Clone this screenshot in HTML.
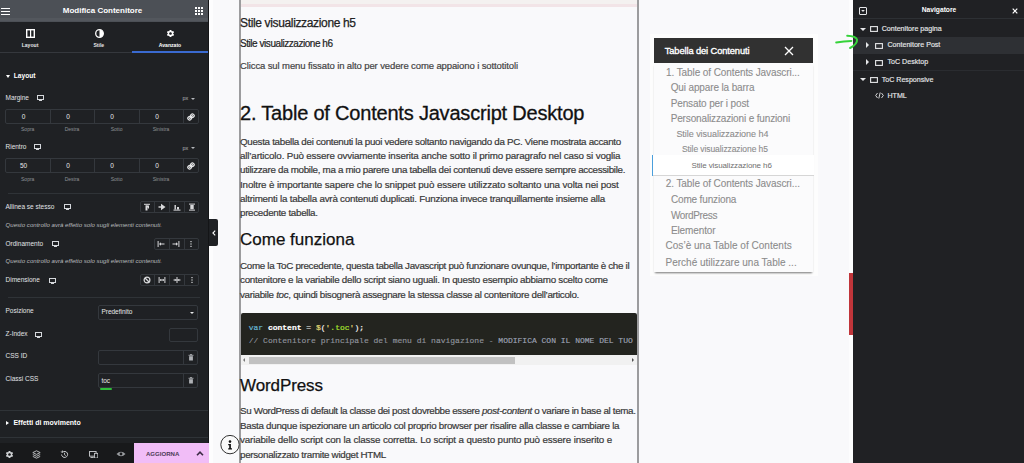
<!DOCTYPE html>
<html><head><meta charset="utf-8">
<style>
*{margin:0;padding:0;box-sizing:border-box}
html,body{width:1024px;height:463px;overflow:hidden;background:#f9f9fb;font-family:"Liberation Sans",sans-serif;position:relative}
.a{position:absolute;white-space:nowrap}
</style></head><body>
<div class="a" style="left:0px;top:0px;width:209.00px;height:463.00px;background:#1f2124"></div>
<div class="a" style="left:0px;top:0px;width:209.00px;height:21.50px;background:#4c5056"></div>
<div class="a" style="left:1px;top:8px;width:9.00px;height:1.40px;background:#fff"></div>
<div class="a" style="left:1px;top:10.8px;width:9.00px;height:1.40px;background:#fff"></div>
<div class="a" style="left:1px;top:13.6px;width:9.00px;height:1.40px;background:#fff"></div>
<div class="a" style="left:27.50px;width:150px;text-align:center;top:6.40px;line-height:10px;font-size:8px;color:#fff;font-weight:bold;">Modifica Contenitore</div>
<div class="a" style="left:0px;top:18.3px;width:209.00px;height:3.20px;background:#53575d"></div>
<div class="a" style="left:194.5px;top:6.8px;width:2.40px;height:2.20px;background:#fff"></div>
<div class="a" style="left:194.5px;top:9.7px;width:2.40px;height:2.20px;background:#fff"></div>
<div class="a" style="left:194.5px;top:12.6px;width:2.40px;height:2.20px;background:#fff"></div>
<div class="a" style="left:197.5px;top:6.8px;width:2.40px;height:2.20px;background:#fff"></div>
<div class="a" style="left:197.5px;top:9.7px;width:2.40px;height:2.20px;background:#fff"></div>
<div class="a" style="left:197.5px;top:12.6px;width:2.40px;height:2.20px;background:#fff"></div>
<div class="a" style="left:200.5px;top:6.8px;width:2.40px;height:2.20px;background:#fff"></div>
<div class="a" style="left:200.5px;top:9.7px;width:2.40px;height:2.20px;background:#fff"></div>
<div class="a" style="left:200.5px;top:12.6px;width:2.40px;height:2.20px;background:#fff"></div>
<svg class="a" style="left:26px;top:29px" width="9" height="9" viewBox="0 0 9 9"><rect x="0.7" y="0.7" width="7.6" height="7.6" fill="none" stroke="#fff" stroke-width="1.4"/><rect x="4" y="1" width="1.2" height="7" fill="#fff"/></svg>
<svg class="a" style="left:94.5px;top:29px" width="9" height="9" viewBox="0 0 9 9"><circle cx="4.5" cy="4.5" r="3.8" fill="none" stroke="#fff" stroke-width="1.3"/><path d="M4.5 0.7 A3.8 3.8 0 0 1 4.5 8.3 Z" fill="#fff"/></svg>
<svg class="a" style="left:165.5px;top:28.5px" width="9" height="9" viewBox="0 0 24 24"><path fill="#fff" d="M19.14 12.94c.04-.3.06-.61.06-.94 0-.32-.02-.64-.07-.94l2.03-1.58a.49.49 0 0 0 .12-.61l-1.92-3.32a.488.488 0 0 0-.59-.22l-2.39.96c-.5-.38-1.03-.7-1.62-.94l-.36-2.54a.484.484 0 0 0-.48-.41h-3.84c-.24 0-.43.17-.47.41l-.36 2.54c-.59.24-1.13.57-1.62.94l-2.39-.96c-.22-.08-.47 0-.59.22L2.74 8.87c-.12.21-.08.47.12.61l2.03 1.58c-.05.3-.09.63-.09.94s.02.64.07.94l-2.03 1.58a.49.49 0 0 0-.12.61l1.92 3.32c.12.22.37.29.59.22l2.39-.96c.5.38 1.03.7 1.62.94l.36 2.54c.05.24.24.41.48.41h3.84c.24 0 .44-.17.47-.41l.36-2.54c.59-.24 1.13-.56 1.62-.94l2.39.96c.22.08.47 0 .59-.22l1.92-3.32c.12-.22.07-.47-.12-.61l-2.01-1.58zM12 15.6c-1.98 0-3.6-1.62-3.6-3.6s1.62-3.6 3.6-3.6 3.6 1.62 3.6 3.6-1.62 3.6-3.6 3.6z"/></svg>
<div class="a" style="left:-10.00px;width:80px;text-align:center;top:39.50px;line-height:10px;font-size:5.1px;color:#e6e7e8;font-weight:bold;">Layout</div>
<div class="a" style="left:58.80px;width:80px;text-align:center;top:39.50px;line-height:10px;font-size:5.1px;color:#e6e7e8;font-weight:bold;">Stile</div>
<div class="a" style="left:130.00px;width:80px;text-align:center;top:39.50px;line-height:10px;font-size:5.1px;color:#fff;font-weight:bold;">Avanzato</div>
<div class="a" style="left:0px;top:52px;width:132.00px;height:1.00px;background:#35383d"></div>
<div class="a" style="left:131.5px;top:51.3px;width:77.50px;height:1.70px;background:#3a6ad0"></div>
<div class="a" style="left:13.8px;top:70.50px;line-height:10px;font-size:6.6px;color:#fff;font-weight:bold;font-style:normal;">Layout</div>
<div class="a" style="left:6px;top:74.5px;width:0;height:0;border-left:2.5px solid transparent;border-right:2.5px solid transparent;border-top:3px solid #fff"></div>
<div class="a" style="left:5.5px;top:92.70px;line-height:10px;font-size:6.5px;color:#e2e4e7;font-weight:normal;font-style:normal;">Margine</div>
<svg class="a" style="left:37px;top:95px" width="7" height="6" viewBox="0 0 7 6"><rect x="0.5" y="0.5" width="6" height="4" fill="none" stroke="#d5d8dc" stroke-width="1"/><rect x="2" y="5" width="3" height="1" fill="#d5d8dc"/></svg>
<div class="a" style="left:182.5px;top:93.20px;line-height:10px;font-size:5.5px;color:#b5b8bc;font-weight:normal;font-style:normal;">px</div>
<div class="a" style="left:190.5px;top:97.7px;width:0;height:0;border-left:2px solid transparent;border-right:2px solid transparent;border-top:2px solid #b5b8bc"></div>
<div class="a" style="left:5px;top:109px;width:194.00px;height:15.00px;border:1px solid #34383d;border-radius:2px"></div>
<div class="a" style="left:49.5px;top:109px;width:1.00px;height:15.00px;background:#34383d"></div>
<div class="a" style="left:94px;top:109px;width:1.00px;height:15.00px;background:#34383d"></div>
<div class="a" style="left:139px;top:109px;width:1.00px;height:15.00px;background:#34383d"></div>
<div class="a" style="left:183px;top:109px;width:1.00px;height:15.00px;background:#34383d"></div>
<div class="a" style="left:-16.50px;width:80px;text-align:center;top:111.50px;line-height:10px;font-size:6.5px;color:#e8e9ea;font-weight:normal;">0</div>
<div class="a" style="left:28.00px;width:80px;text-align:center;top:111.50px;line-height:10px;font-size:6.5px;color:#e8e9ea;font-weight:normal;">0</div>
<div class="a" style="left:72.00px;width:80px;text-align:center;top:111.50px;line-height:10px;font-size:6.5px;color:#e8e9ea;font-weight:normal;">0</div>
<div class="a" style="left:117.00px;width:80px;text-align:center;top:111.50px;line-height:10px;font-size:6.5px;color:#e8e9ea;font-weight:normal;">0</div>
<div class="a" style="left:-12.30px;width:80px;text-align:center;top:124.00px;line-height:10px;font-size:5px;color:#8e9196;font-weight:normal;">Sopra</div>
<div class="a" style="left:32.00px;width:80px;text-align:center;top:124.00px;line-height:10px;font-size:5px;color:#8e9196;font-weight:normal;">Destra</div>
<div class="a" style="left:76.60px;width:80px;text-align:center;top:124.00px;line-height:10px;font-size:5px;color:#8e9196;font-weight:normal;">Sotto</div>
<div class="a" style="left:121.00px;width:80px;text-align:center;top:124.00px;line-height:10px;font-size:5px;color:#8e9196;font-weight:normal;">Sinistra</div>
<svg class="a" style="left:187px;top:112.5px" width="8" height="8" viewBox="0 0 8 8"><path d="M2.2 5.8 L5.8 2.2" stroke="#e8e9ea" stroke-width="1.3"/><rect x="0.9" y="3.6" width="3.4" height="3.4" rx="1.5" transform="rotate(-45 2.6 5.3)" fill="none" stroke="#e8e9ea" stroke-width="1.2"/><rect x="3.7" y="1" width="3.4" height="3.4" rx="1.5" transform="rotate(-45 5.4 2.7)" fill="none" stroke="#e8e9ea" stroke-width="1.2"/></svg>
<div class="a" style="left:5.5px;top:141.70px;line-height:10px;font-size:6.5px;color:#e2e4e7;font-weight:normal;font-style:normal;">Rientro</div>
<svg class="a" style="left:34px;top:144px" width="7" height="6" viewBox="0 0 7 6"><rect x="0.5" y="0.5" width="6" height="4" fill="none" stroke="#d5d8dc" stroke-width="1"/><rect x="2" y="5" width="3" height="1" fill="#d5d8dc"/></svg>
<div class="a" style="left:182.5px;top:142.80px;line-height:10px;font-size:5.5px;color:#b5b8bc;font-weight:normal;font-style:normal;">px</div>
<div class="a" style="left:190.5px;top:147.3px;width:0;height:0;border-left:2px solid transparent;border-right:2px solid transparent;border-top:2px solid #b5b8bc"></div>
<div class="a" style="left:5px;top:158px;width:194.00px;height:15.00px;border:1px solid #34383d;border-radius:2px"></div>
<div class="a" style="left:49.5px;top:158px;width:1.00px;height:15.00px;background:#34383d"></div>
<div class="a" style="left:94px;top:158px;width:1.00px;height:15.00px;background:#34383d"></div>
<div class="a" style="left:139px;top:158px;width:1.00px;height:15.00px;background:#34383d"></div>
<div class="a" style="left:183px;top:158px;width:1.00px;height:15.00px;background:#34383d"></div>
<div class="a" style="left:-16.50px;width:80px;text-align:center;top:160.50px;line-height:10px;font-size:6.5px;color:#e8e9ea;font-weight:normal;">50</div>
<div class="a" style="left:28.00px;width:80px;text-align:center;top:160.50px;line-height:10px;font-size:6.5px;color:#e8e9ea;font-weight:normal;">0</div>
<div class="a" style="left:72.00px;width:80px;text-align:center;top:160.50px;line-height:10px;font-size:6.5px;color:#e8e9ea;font-weight:normal;">0</div>
<div class="a" style="left:117.00px;width:80px;text-align:center;top:160.50px;line-height:10px;font-size:6.5px;color:#e8e9ea;font-weight:normal;">0</div>
<div class="a" style="left:-12.30px;width:80px;text-align:center;top:173.50px;line-height:10px;font-size:5px;color:#8e9196;font-weight:normal;">Sopra</div>
<div class="a" style="left:32.00px;width:80px;text-align:center;top:173.50px;line-height:10px;font-size:5px;color:#8e9196;font-weight:normal;">Destra</div>
<div class="a" style="left:76.60px;width:80px;text-align:center;top:173.50px;line-height:10px;font-size:5px;color:#8e9196;font-weight:normal;">Sotto</div>
<div class="a" style="left:121.00px;width:80px;text-align:center;top:173.50px;line-height:10px;font-size:5px;color:#8e9196;font-weight:normal;">Sinistra</div>
<svg class="a" style="left:187px;top:161.5px" width="8" height="8" viewBox="0 0 8 8"><path d="M2.2 5.8 L5.8 2.2" stroke="#e8e9ea" stroke-width="1.3"/><rect x="0.9" y="3.6" width="3.4" height="3.4" rx="1.5" transform="rotate(-45 2.6 5.3)" fill="none" stroke="#e8e9ea" stroke-width="1.2"/><rect x="3.7" y="1" width="3.4" height="3.4" rx="1.5" transform="rotate(-45 5.4 2.7)" fill="none" stroke="#e8e9ea" stroke-width="1.2"/></svg>
<div class="a" style="left:8px;top:192.5px;width:191.50px;height:1.00px;background:#2f3337"></div>
<div class="a" style="left:5.5px;top:202.00px;line-height:10px;font-size:6.5px;color:#e2e4e7;font-weight:normal;font-style:normal;">Allinea se stesso</div>
<svg class="a" style="left:63.5px;top:204px" width="7" height="6" viewBox="0 0 7 6"><rect x="0.5" y="0.5" width="6" height="4" fill="none" stroke="#d5d8dc" stroke-width="1"/><rect x="2" y="5" width="3" height="1" fill="#d5d8dc"/></svg>
<div class="a" style="left:139.5px;top:200.5px;width:59.50px;height:12.00px;border:1px solid #34383d;border-radius:2px"></div>
<div class="a" style="left:154.375px;top:200.5px;width:1.00px;height:12.00px;background:#34383d"></div>
<div class="a" style="left:169.25px;top:200.5px;width:1.00px;height:12.00px;background:#34383d"></div>
<div class="a" style="left:184.125px;top:200.5px;width:1.00px;height:12.00px;background:#34383d"></div>
<div class="a" style="left:5.5px;top:219.90px;line-height:10px;font-size:6.1px;color:#b9bbbe;font-weight:normal;font-style:italic;">Questo controllo avrà effetto solo sugli elementi contenuti.</div>
<div class="a" style="left:5.5px;top:238.70px;line-height:10px;font-size:6.5px;color:#e2e4e7;font-weight:normal;font-style:normal;">Ordinamento</div>
<svg class="a" style="left:51.8px;top:241px" width="7" height="6" viewBox="0 0 7 6"><rect x="0.5" y="0.5" width="6" height="4" fill="none" stroke="#d5d8dc" stroke-width="1"/><rect x="2" y="5" width="3" height="1" fill="#d5d8dc"/></svg>
<div class="a" style="left:153.5px;top:237.5px;width:45.50px;height:12.00px;border:1px solid #34383d;border-radius:2px"></div>
<div class="a" style="left:168.66666666666666px;top:237.5px;width:1.00px;height:12.00px;background:#34383d"></div>
<div class="a" style="left:183.83333333333334px;top:237.5px;width:1.00px;height:12.00px;background:#34383d"></div>
<div class="a" style="left:5.5px;top:256.20px;line-height:10px;font-size:6.1px;color:#b9bbbe;font-weight:normal;font-style:italic;">Questo controllo avrà effetto solo sugli elementi contenuti.</div>
<div class="a" style="left:5.5px;top:275.10px;line-height:10px;font-size:6.5px;color:#e2e4e7;font-weight:normal;font-style:normal;">Dimensione</div>
<svg class="a" style="left:48.7px;top:277.5px" width="7" height="6" viewBox="0 0 7 6"><rect x="0.5" y="0.5" width="6" height="4" fill="none" stroke="#d5d8dc" stroke-width="1"/><rect x="2" y="5" width="3" height="1" fill="#d5d8dc"/></svg>
<div class="a" style="left:139.5px;top:274px;width:59.50px;height:12.00px;border:1px solid #34383d;border-radius:2px"></div>
<div class="a" style="left:154.375px;top:274px;width:1.00px;height:12.00px;background:#34383d"></div>
<div class="a" style="left:169.25px;top:274px;width:1.00px;height:12.00px;background:#34383d"></div>
<div class="a" style="left:184.125px;top:274px;width:1.00px;height:12.00px;background:#34383d"></div>
<div class="a" style="left:8px;top:296.5px;width:191.50px;height:1.00px;background:#2f3337"></div>
<div class="a" style="left:5.5px;top:306.30px;line-height:10px;font-size:6.5px;color:#e2e4e7;font-weight:normal;font-style:normal;">Posizione</div>
<div class="a" style="left:97.5px;top:305px;width:100.50px;height:14.50px;border:1px solid #34383d;border-radius:2px"></div>
<div class="a" style="left:101.4px;top:307.30px;line-height:10px;font-size:6.5px;color:#e8e9ea;font-weight:normal;font-style:normal;">Predefinito</div>
<div class="a" style="left:190px;top:311.5px;width:0;height:0;border-left:2.5px solid transparent;border-right:2.5px solid transparent;border-top:2.5px solid #e8e9ea"></div>
<div class="a" style="left:5.5px;top:329.20px;line-height:10px;font-size:6.5px;color:#e2e4e7;font-weight:normal;font-style:normal;">Z-Index</div>
<svg class="a" style="left:35px;top:331.5px" width="7" height="6" viewBox="0 0 7 6"><rect x="0.5" y="0.5" width="6" height="4" fill="none" stroke="#d5d8dc" stroke-width="1"/><rect x="2" y="5" width="3" height="1" fill="#d5d8dc"/></svg>
<div class="a" style="left:169px;top:328px;width:29.00px;height:14.00px;border:1px solid #34383d;border-radius:2px"></div>
<div class="a" style="left:5.5px;top:351.30px;line-height:10px;font-size:6.5px;color:#e2e4e7;font-weight:normal;font-style:normal;">CSS ID</div>
<div class="a" style="left:97.5px;top:350px;width:100.50px;height:15.00px;border:1px solid #34383d;border-radius:2px"></div>
<div class="a" style="left:183px;top:350px;width:1.00px;height:15.00px;background:#34383d"></div>
<div class="a" style="left:5.5px;top:374.20px;line-height:10px;font-size:6.5px;color:#e2e4e7;font-weight:normal;font-style:normal;">Classi CSS</div>
<div class="a" style="left:97.5px;top:373px;width:100.50px;height:15.00px;border:1px solid #34383d;border-radius:2px"></div>
<div class="a" style="left:183px;top:373px;width:1.00px;height:15.00px;background:#34383d"></div>
<div class="a" style="left:101.4px;top:375.50px;line-height:10px;font-size:6.5px;color:#e8e9ea;font-weight:normal;font-style:normal;">toc</div>
<div class="a" style="left:99.6px;top:388px;width:12.00px;height:1.50px;background:#2fbf3a;border-radius:1px"></div>
<svg class="a" style="left:187.5px;top:354.0px" width="6" height="7" viewBox="0 0 6 7"><rect x="0.5" y="0.8" width="5" height="0.9" fill="#aeb1b5"/><rect x="2" y="0.2" width="2" height="0.9" fill="#aeb1b5"/><rect x="1.1" y="2.2" width="3.8" height="4.3" fill="#aeb1b5"/></svg>
<svg class="a" style="left:187.5px;top:377.0px" width="6" height="7" viewBox="0 0 6 7"><rect x="0.5" y="0.8" width="5" height="0.9" fill="#aeb1b5"/><rect x="2" y="0.2" width="2" height="0.9" fill="#aeb1b5"/><rect x="1.1" y="2.2" width="3.8" height="4.3" fill="#aeb1b5"/></svg>
<div class="a" style="left:0px;top:410px;width:209.00px;height:1.00px;background:#2f3337"></div>
<div class="a" style="left:13.4px;top:418.30px;line-height:10px;font-size:7px;color:#fff;font-weight:bold;font-style:normal;">Effetti di movimento</div>
<div class="a" style="left:6px;top:420.5px;width:0;height:0;border-top:2.5px solid transparent;border-bottom:2.5px solid transparent;border-left:3px solid #fff"></div>
<div class="a" style="left:0px;top:436.5px;width:209.00px;height:1.00px;background:#2f3337"></div>
<div class="a" style="left:0px;top:442.5px;width:209.00px;height:20.50px;background:#18191b"></div>
<div class="a" style="left:134.3px;top:442.5px;width:74.70px;height:20.50px;background:#f1bdf7"></div>
<div class="a" style="left:146px;top:448.80px;line-height:10px;font-size:6.05px;color:#4b3a55;font-weight:bold;font-style:normal;">AGGIORNA</div>
<svg class="a" style="left:196px;top:451.3px" width="8" height="5" viewBox="0 0 8 5"><path d="M1 4.2 L4 1.2 L7 4.2" fill="none" stroke="#3c2b45" stroke-width="1.6"/></svg>
<div class="a" style="left:5.800000000000001px;top:450px;width:6.00px;height:6.00px;background:#c9cbce;border-radius:2px;opacity:.0"></div>
<div class="a" style="left:33.3px;top:450px;width:6.00px;height:6.00px;background:#c9cbce;border-radius:2px;opacity:.0"></div>
<div class="a" style="left:61.400000000000006px;top:450px;width:6.00px;height:6.00px;background:#c9cbce;border-radius:2px;opacity:.0"></div>
<div class="a" style="left:89.6px;top:450px;width:6.00px;height:6.00px;background:#c9cbce;border-radius:2px;opacity:.0"></div>
<div class="a" style="left:117.4px;top:450px;width:6.00px;height:6.00px;background:#c9cbce;border-radius:2px;opacity:.0"></div>
<svg class="a" style="left:4.5px;top:450px" width="9" height="9" viewBox="0 0 24 24"><path fill="#d0d2d5" d="M19.14 12.94c.04-.3.06-.61.06-.94 0-.32-.02-.64-.07-.94l2.03-1.58a.49.49 0 0 0 .12-.61l-1.92-3.32a.488.488 0 0 0-.59-.22l-2.39.96c-.5-.38-1.030-.7-1.62-.94l-.36-2.54a.484.484 0 0 0-.48-.41h-3.84c-.24 0-.43.17-.47.41l-.36 2.54c-.59.24-1.13.57-1.62.94l-2.39-.96c-.22-.08-.47 0-.59.22L2.74 8.87c-.12.21-.08.47.12.61l2.03 1.58c-.05.3-.09.63-.09.94s.02.64.07.94l-2.03 1.58a.49.49 0 0 0-.12.61l1.92 3.32c.12.22.37.29.59.22l2.39-.96c.5.38 1.03.7 1.62.94l.36 2.54c.05.24.24.41.48.41h3.84c.24 0 .44-.17.47-.41l.36-2.54c.59-.24 1.13-.56 1.62-.94l2.39.96c.22.08.47 0 .59-.22l1.92-3.32c.12-.22.07-.47-.12-.61l-2.01-1.58zM12 15.6c-1.98 0-3.6-1.62-3.6-3.6s1.62-3.6 3.6-3.6 3.6 1.62 3.6 3.6-1.62 3.6-3.6 3.6z"/></svg>
<svg class="a" style="left:32px;top:450px" width="9" height="9" viewBox="0 0 9 9"><path d="M4.5 0.8 L8.2 2.6 L4.5 4.4 L0.8 2.6 Z" fill="none" stroke="#c7c9cc" stroke-width="0.9"/><path d="M0.8 4.5 L4.5 6.3 L8.2 4.5 M0.8 6.4 L4.5 8.2 L8.2 6.4" fill="none" stroke="#c7c9cc" stroke-width="0.9"/></svg>
<svg class="a" style="left:60px;top:450.3px" width="9" height="9" viewBox="0 0 9 9"><path d="M1.6 4.5 A3 3 0 1 0 2.5 2.3" fill="none" stroke="#c7c9cc" stroke-width="1"/><path d="M0.8 1.8 L2.7 2.3 L2.4 0.5" fill="none" stroke="#c7c9cc" stroke-width="0.9"/><path d="M4.5 2.8 V4.7 L5.8 5.6" fill="none" stroke="#c7c9cc" stroke-width="0.9"/></svg>
<svg class="a" style="left:88.5px;top:450.5px" width="9.5" height="7.5" viewBox="0 0 10 8"><rect x="0.5" y="0.5" width="7" height="5" fill="none" stroke="#c7c9cc" stroke-width="1"/><rect x="5.8" y="2.5" width="3.5" height="5" fill="#18191b" stroke="#c7c9cc" stroke-width="0.9"/><rect x="1.5" y="6.5" width="3.5" height="1" fill="#c7c9cc"/></svg>
<svg class="a" style="left:115.5px;top:450.5px" width="10" height="6" viewBox="0 0 10 6"><path d="M0.5 3 Q5 -1.5 9.5 3 Q5 7.5 0.5 3 Z" fill="#9a9da1"/><circle cx="5" cy="3" r="1.4" fill="#18191b"/></svg>
<svg class="a" style="left:143.2px;top:202.8px" width="8" height="8" viewBox="0 0 8 8"><rect x="1" y="0.8" width="6" height="1" fill="#d9dadc"/><path d="M2.5 2.5 L6 2.5 L6 6 Z" fill="#d9dadc"/><rect x="2.5" y="2.5" width="2" height="5" fill="#d9dadc"/></svg>
<svg class="a" style="left:158.0px;top:202.8px" width="8" height="8" viewBox="0 0 8 8"><rect x="0.5" y="3.3" width="3" height="1.4" fill="#d9dadc"/><path d="M3 0.8 L7.5 4 L3 7.2 Z" fill="#d9dadc"/></svg>
<svg class="a" style="left:172.8px;top:202.8px" width="8" height="8" viewBox="0 0 8 8"><rect x="1.5" y="2" width="1.4" height="4.5" fill="#d9dadc"/><rect x="4" y="4" width="2" height="2.5" fill="#d9dadc"/><rect x="0.5" y="6.6" width="7" height="1" fill="#d9dadc"/></svg>
<svg class="a" style="left:187.6px;top:202.8px" width="8" height="8" viewBox="0 0 8 8"><rect x="1" y="0.6" width="6" height="1" fill="#d9dadc"/><rect x="1" y="6.6" width="6" height="1" fill="#d9dadc"/><rect x="2.3" y="2" width="3.4" height="4.2" fill="#d9dadc"/></svg>
<svg class="a" style="left:157.0px;top:239.5px" width="8" height="8" viewBox="0 0 8 8"><rect x="0.6" y="1" width="1" height="6" fill="#d9dadc"/><path d="M2 4 L4 2.3 L4 5.7 Z" fill="#d9dadc"/><rect x="3.5" y="3.5" width="4" height="1" fill="#d9dadc"/></svg>
<svg class="a" style="left:172.2px;top:239.5px" width="8" height="8" viewBox="0 0 8 8"><rect x="6.4" y="1" width="1" height="6" fill="#d9dadc"/><path d="M6 4 L4 2.3 L4 5.7 Z" fill="#d9dadc"/><rect x="0.5" y="3.5" width="4" height="1" fill="#d9dadc"/></svg>
<svg class="a" style="left:187.4px;top:239.5px" width="8" height="8" viewBox="0 0 8 8"><rect x="3.4" y="1" width="1.2" height="1.2" fill="#d9dadc"/><rect x="3.4" y="3.4" width="1.2" height="1.2" fill="#d9dadc"/><rect x="3.4" y="5.8" width="1.2" height="1.2" fill="#d9dadc"/></svg>
<svg class="a" style="left:143.2px;top:276.2px" width="8" height="8" viewBox="0 0 8 8"><circle cx="4" cy="4" r="2.9" fill="none" stroke="#d9dadc" stroke-width="1.2"/><path d="M2 2 L6 6" stroke="#d9dadc" stroke-width="1.2"/></svg>
<svg class="a" style="left:158.0px;top:276.2px" width="8" height="8" viewBox="0 0 8 8"><rect x="0.6" y="1" width="1" height="6" fill="#d9dadc"/><rect x="6.4" y="1" width="1" height="6" fill="#d9dadc"/><rect x="2" y="3.5" width="4" height="1" fill="#d9dadc"/><path d="M1.8 4 L3.2 2.8 L3.2 5.2 Z M6.2 4 L4.8 2.8 L4.8 5.2 Z" fill="#d9dadc"/></svg>
<svg class="a" style="left:172.8px;top:276.2px" width="8" height="8" viewBox="0 0 8 8"><rect x="3.5" y="1" width="1" height="6" fill="#d9dadc"/><rect x="0.5" y="3.5" width="7" height="1" fill="#d9dadc"/><path d="M3.2 4 L1.8 2.8 L1.8 5.2 Z M4.8 4 L6.2 2.8 L6.2 5.2 Z" fill="#d9dadc"/></svg>
<svg class="a" style="left:187.6px;top:276.2px" width="8" height="8" viewBox="0 0 8 8"><rect x="3.4" y="1" width="1.2" height="1.2" fill="#d9dadc"/><rect x="3.4" y="3.4" width="1.2" height="1.2" fill="#d9dadc"/><rect x="3.4" y="5.8" width="1.2" height="1.2" fill="#d9dadc"/></svg>
<div class="a" style="left:208px;top:0px;width:1.00px;height:442.50px;background:#141517"></div>
<div class="a" style="left:209px;top:0px;width:4.00px;height:463.00px;background:#fdfdfe"></div>
<div class="a" style="left:209px;top:219px;width:8.50px;height:27.00px;background:#1f2124;border-radius:0 2px 2px 0"></div>
<svg class="a" style="left:211.5px;top:229.5px" width="4" height="6" viewBox="0 0 4 6"><path d="M3.2 0.6 L0.9 3 L3.2 5.4" fill="none" stroke="#fff" stroke-width="1.1"/></svg>
<div class="a" style="left:240.8px;top:0px;width:396.20px;height:7.00px;background:#f4f1f0"></div>
<div class="a" style="left:240.8px;top:3.6px;width:396.20px;height:3.20px;background:#f2e4e7"></div>
<div class="a" style="left:239.3px;top:0px;width:1.50px;height:463.00px;background:#9c9c9e"></div>
<div class="a" style="left:637px;top:0px;width:1.50px;height:463.00px;background:#9c9c9e"></div>
<div class="a" style="left:240px;top:14.80px;line-height:16px;font-size:12px;color:#222;font-weight:normal;letter-spacing:-0.35px;-webkit-text-stroke:0.25px #222">Stile visualizzazione h5</div>
<div class="a" style="left:240px;top:35.50px;line-height:16px;font-size:10px;color:#222;font-weight:normal;letter-spacing:-0.45px;-webkit-text-stroke:0.2px #222">Stile visualizzazione h6</div>
<div class="a" style="left:240px;top:58.47px;line-height:16px;font-size:9.5px;color:#444;font-weight:normal;letter-spacing:-0.11px;-webkit-text-stroke:0.2px #444">Clicca sul menu fissato in alto per vedere come appaiono i sottotitoli</div>
<div class="a" style="left:240px;top:100.20px;line-height:26px;font-size:20px;color:#111;font-weight:normal;letter-spacing:-0.2px;-webkit-text-stroke:0.3px #111">2. Table of Contents Javascript Desktop</div>
<div class="a" style="left:240px;top:134.75px;line-height:14px;font-size:9.8px;color:#383838;font-weight:normal;letter-spacing:-0.304px;-webkit-text-stroke:0.2px #383838">Questa tabella dei contenuti la puoi vedere soltanto navigando da PC. Viene mostrata accanto</div>
<div class="a" style="left:240px;top:148.85px;line-height:14px;font-size:9.8px;color:#383838;font-weight:normal;letter-spacing:-0.16px;-webkit-text-stroke:0.2px #383838">all’articolo. Può essere ovviamente inserita anche sotto il primo paragrafo nel caso si voglia</div>
<div class="a" style="left:240px;top:163.05px;line-height:14px;font-size:9.8px;color:#383838;font-weight:normal;letter-spacing:-0.308px;-webkit-text-stroke:0.2px #383838">utilizzare da mobile, ma a mio parere una tabella dei contenuti deve essere sempre accessibile.</div>
<div class="a" style="left:240px;top:177.55px;line-height:14px;font-size:9.8px;color:#383838;font-weight:normal;letter-spacing:-0.11px;-webkit-text-stroke:0.2px #383838">Inoltre è importante sapere che lo snippet può essere utilizzato soltanto una volta nei post</div>
<div class="a" style="left:240px;top:191.85px;line-height:14px;font-size:9.8px;color:#383838;font-weight:normal;letter-spacing:-0.225px;-webkit-text-stroke:0.2px #383838">altrimenti la tabella avrà contenuti duplicati. Funziona invece tranquillamente insieme alla</div>
<div class="a" style="left:240px;top:206.45px;line-height:14px;font-size:9.8px;color:#383838;font-weight:normal;letter-spacing:-0.302px;-webkit-text-stroke:0.2px #383838">precedente tabella.</div>
<div class="a" style="left:240px;top:258.95px;line-height:14px;font-size:9.8px;color:#383838;font-weight:normal;letter-spacing:-0.315px;-webkit-text-stroke:0.2px #383838">Come la ToC precedente, questa tabella Javascript può funzionare ovunque, l’importante è che il</div>
<div class="a" style="left:240px;top:273.35px;line-height:14px;font-size:9.8px;color:#383838;font-weight:normal;letter-spacing:-0.262px;-webkit-text-stroke:0.2px #383838">contenitore e la variabile dello script siano uguali. In questo esempio abbiamo scelto come</div>
<div class="a" style="left:240px;top:287.65px;line-height:14px;font-size:9.8px;color:#383838;font-weight:normal;letter-spacing:-0.307px;-webkit-text-stroke:0.2px #383838">variabile <i>toc</i>, quindi bisognerà assegnare la stessa classe al contenitore dell’articolo.</div>
<div class="a" style="left:240px;top:404.35px;line-height:14px;font-size:9.8px;color:#383838;font-weight:normal;letter-spacing:-0.335px;-webkit-text-stroke:0.2px #383838">Su WordPress di default la classe dei post dovrebbe essere <i>post-content</i> o variare in base al tema.</div>
<div class="a" style="left:240px;top:418.75px;line-height:14px;font-size:9.8px;color:#383838;font-weight:normal;letter-spacing:-0.278px;-webkit-text-stroke:0.2px #383838">Basta dunque ispezionare un articolo col proprio browser per risalire alla classe e cambiare la</div>
<div class="a" style="left:240px;top:433.25px;line-height:14px;font-size:9.8px;color:#383838;font-weight:normal;letter-spacing:-0.14px;-webkit-text-stroke:0.2px #383838">variabile dello script con la classe corretta. Lo script a questo punto può essere inserito e</div>
<div class="a" style="left:240px;top:447.65px;line-height:14px;font-size:9.8px;color:#383838;font-weight:normal;letter-spacing:-0.302px;-webkit-text-stroke:0.2px #383838">personalizzato tramite widget HTML</div>
<div class="a" style="left:240px;top:228.60px;line-height:22px;font-size:17px;color:#111;font-weight:normal;letter-spacing:0px;-webkit-text-stroke:0.25px #111">Come funziona</div>
<div class="a" style="left:240px;top:374.60px;line-height:22px;font-size:17px;color:#111;font-weight:normal;letter-spacing:-0.1px;-webkit-text-stroke:0.25px #111">WordPress</div>
<div class="a" style="left:240.5px;top:312.5px;width:396.50px;height:42.80px;background:#23241f;border-radius:2px 2px 0 0"></div>
<div class="a" style="left:248.7px;top:322px;line-height:12px;font-family:'Liberation Mono',monospace;font-size:8px;color:#f8f8f2;-webkit-text-stroke:0.2px"><span style="color:#66b4d0">var</span> <b style="font-weight:bold;color:#fff">content</b> = <span style="color:#e6db74">$</span>(<span style="color:#e6db74">'</span><span style="color:#a6e22e">.toc</span><span style="color:#e6db74">'</span>);</div>
<div class="a" style="left:248.7px;top:335px;line-height:12px;font-family:'Liberation Mono',monospace;font-size:8px;color:#8f939c;-webkit-text-stroke:0.15px">// Contenitore principale del menu di navigazione - <span style="color:#9ea3b5">MODIFICA CON IL NOME DEL TUO</span></div>
<div class="a" style="left:240.5px;top:355.3px;width:396.50px;height:9.70px;background:#f1f1f1"></div>
<div class="a" style="left:249px;top:356.5px;width:266.20px;height:7.50px;background:#c1c1c1"></div>
<div class="a" style="left:242.5px;top:358.3px;width:0;height:0;border-top:2px solid transparent;border-bottom:2px solid transparent;border-right:2.5px solid #777"></div>
<div class="a" style="left:632px;top:358.3px;width:0;height:0;border-top:2px solid transparent;border-bottom:2px solid transparent;border-left:2.5px solid #505050"></div>
<svg class="a" style="left:220px;top:434.5px" width="20" height="20" viewBox="0 0 20 20"><circle cx="10" cy="9.6" r="9.2" fill="#fafafa" stroke="#333" stroke-width="1"/><circle cx="10" cy="6.6" r="1.3" fill="#111"/><path d="M8.2 9 H10.9 V13.2 H12 V14.4 H8.2 V13.2 H9.2 V10.2 H8.2 Z" fill="#111"/></svg>
<div class="a" style="left:650px;top:34px;width:168.00px;height:242.00px;background:#fdfdfd"></div>
<div class="a" style="left:654px;top:63px;width:159.00px;height:208.50px;background:#fbfbfc;box-shadow:0 2px 2px -1px rgba(0,0,0,.55)"></div>
<div class="a" style="left:654px;top:38.4px;width:159.30px;height:25.00px;background:#313131"></div>
<div class="a" style="left:664.7px;top:44.00px;line-height:14px;font-size:9.3px;color:#fff;font-weight:normal;letter-spacing:-0.1px;-webkit-text-stroke:0.35px #fff">Tabella dei Contenuti</div>
<svg class="a" style="left:784px;top:46px" width="10" height="10" viewBox="0 0 10 10"><path d="M1 1 L9 9 M9 1 L1 9" stroke="#fff" stroke-width="1.3"/></svg>
<div class="a" style="left:666px;top:65.53px;line-height:14px;font-size:10px;color:#8c8c8c;font-weight:normal;letter-spacing:-0.089px;-webkit-text-stroke:0.1px #8c8c8c">1. Table of Contents Javascri...</div>
<div class="a" style="left:670.7px;top:81.13px;line-height:14px;font-size:10px;color:#8c8c8c;font-weight:normal;letter-spacing:-0.13px;-webkit-text-stroke:0.1px #8c8c8c">Qui appare la barra</div>
<div class="a" style="left:670.7px;top:96.63px;line-height:14px;font-size:10px;color:#8c8c8c;font-weight:normal;letter-spacing:-0.128px;-webkit-text-stroke:0.1px #8c8c8c">Pensato per i post</div>
<div class="a" style="left:670.7px;top:112.13px;line-height:14px;font-size:10px;color:#8c8c8c;font-weight:normal;letter-spacing:-0.147px;-webkit-text-stroke:0.1px #8c8c8c">Personalizzazioni e funzioni</div>
<div class="a" style="left:676.4px;top:127.02px;line-height:14px;font-size:9px;color:#8c8c8c;font-weight:normal;letter-spacing:-0.044px;-webkit-text-stroke:0.1px #8c8c8c">Stile visualizzazione h4</div>
<div class="a" style="left:681.9px;top:141.86px;line-height:14px;font-size:8.5px;color:#8c8c8c;font-weight:normal;letter-spacing:-0.079px;-webkit-text-stroke:0.1px #8c8c8c">Stile visualizzazione h5</div>
<div class="a" style="left:652px;top:155.3px;width:162.00px;height:20.70px;background:#ffffff;border-bottom:1px solid #d6d6d6"></div>
<div class="a" style="left:652px;top:155.3px;width:1.30px;height:20.50px;background:#4a9fdc"></div>
<div class="a" style="left:691.5px;top:159.50px;line-height:12px;font-size:8px;color:#6f6f6f;font-weight:normal;letter-spacing:-0.101px;">Stile visualizzazione h6</div>
<div class="a" style="left:665.7px;top:177.13px;line-height:14px;font-size:10px;color:#8c8c8c;font-weight:normal;letter-spacing:-0.074px;-webkit-text-stroke:0.1px #8c8c8c">2. Table of Contents Javascri...</div>
<div class="a" style="left:670.9px;top:193.23px;line-height:14px;font-size:10px;color:#8c8c8c;font-weight:normal;letter-spacing:-0.144px;-webkit-text-stroke:0.1px #8c8c8c">Come funziona</div>
<div class="a" style="left:670.9px;top:208.83px;line-height:14px;font-size:10px;color:#8c8c8c;font-weight:normal;letter-spacing:-0.331px;-webkit-text-stroke:0.1px #8c8c8c">WordPress</div>
<div class="a" style="left:670.9px;top:224.03px;line-height:14px;font-size:10px;color:#8c8c8c;font-weight:normal;letter-spacing:-0.109px;-webkit-text-stroke:0.1px #8c8c8c">Elementor</div>
<div class="a" style="left:665.5px;top:239.43px;line-height:14px;font-size:10px;color:#8c8c8c;font-weight:normal;letter-spacing:0.031px;-webkit-text-stroke:0.1px #8c8c8c">Cos’è una Table of Contents</div>
<div class="a" style="left:665.5px;top:256.03px;line-height:14px;font-size:10px;color:#8c8c8c;font-weight:normal;letter-spacing:0.006px;-webkit-text-stroke:0.1px #8c8c8c">Perché utilizzare una Table ...</div>
<div class="a" style="left:848.5px;top:0px;width:4.50px;height:463.00px;background:#fdfdfe"></div>
<div class="a" style="left:853px;top:0px;width:171.00px;height:463.00px;background:#202124"></div>
<div class="a" style="left:853px;top:18px;width:171.00px;height:1.00px;background:#2d3034"></div>
<svg class="a" style="left:858.5px;top:6.5px" width="8" height="8" viewBox="0 0 8 8"><rect x="0.5" y="0.5" width="7" height="7" rx="0.5" fill="none" stroke="#e6e7e9" stroke-width="1"/><path d="M2.2 3 L5.8 3 L4 5 Z" fill="#e6e7e9"/></svg>
<div class="a" style="left:899.00px;width:80px;text-align:center;top:5.20px;line-height:10px;font-size:6.7px;color:#fff;font-weight:bold;">Navigatore</div>
<svg class="a" style="left:1011.5px;top:7.5px" width="6" height="6" viewBox="0 0 6 6"><path d="M0.7 0.7 L5.3 5.3 M5.3 0.7 L0.7 5.3" stroke="#fff" stroke-width="1.2"/></svg>
<div class="a" style="left:853px;top:37px;width:171.00px;height:16.70px;background:#2e3034"></div>
<div class="a" style="left:853px;top:70px;width:171.00px;height:0.60px;background:#2a2c30"></div>
<div class="a" style="left:860.4px;top:27.8px;width:0;height:0;border-left:3px solid transparent;border-right:3px solid transparent;border-top:3.5px solid #e6e7e9"></div>
<svg class="a" style="left:869.7px;top:26.3px" width="8" height="6" viewBox="0 0 8 6"><rect x="0.6" y="0.6" width="6.8" height="4.8" fill="none" stroke="#e6e7e9" stroke-width="1.1"/></svg>
<div class="a" style="left:881.7px;top:24.10px;line-height:10px;font-size:7.1px;color:#e6e7e9;font-weight:normal;letter-spacing:0px;-webkit-text-stroke:0.15px #e6e7e9">Contenitore pagina</div>
<div class="a" style="left:866.4px;top:42.3px;width:0;height:0;border-top:3px solid transparent;border-bottom:3px solid transparent;border-left:3.5px solid #e6e7e9"></div>
<svg class="a" style="left:875.2px;top:42.5px" width="8" height="6" viewBox="0 0 8 6"><rect x="0.6" y="0.6" width="6.8" height="4.8" fill="none" stroke="#e6e7e9" stroke-width="1.1"/></svg>
<div class="a" style="left:887.5px;top:40.30px;line-height:10px;font-size:7.1px;color:#e6e7e9;font-weight:normal;letter-spacing:0px;-webkit-text-stroke:0.15px #e6e7e9">Contenitore Post</div>
<div class="a" style="left:866.4px;top:59.3px;width:0;height:0;border-top:3px solid transparent;border-bottom:3px solid transparent;border-left:3.5px solid #e6e7e9"></div>
<svg class="a" style="left:875.2px;top:59.5px" width="8" height="6" viewBox="0 0 8 6"><rect x="0.6" y="0.6" width="6.8" height="4.8" fill="none" stroke="#e6e7e9" stroke-width="1.1"/></svg>
<div class="a" style="left:887.5px;top:57.30px;line-height:10px;font-size:7.1px;color:#e6e7e9;font-weight:normal;letter-spacing:0px;-webkit-text-stroke:0.15px #e6e7e9">ToC Desktop</div>
<div class="a" style="left:860.4px;top:78.2px;width:0;height:0;border-left:3px solid transparent;border-right:3px solid transparent;border-top:3.5px solid #e6e7e9"></div>
<svg class="a" style="left:869.7px;top:76.7px" width="8" height="6" viewBox="0 0 8 6"><rect x="0.6" y="0.6" width="6.8" height="4.8" fill="none" stroke="#e6e7e9" stroke-width="1.1"/></svg>
<div class="a" style="left:881.7px;top:74.50px;line-height:10px;font-size:7.1px;color:#e6e7e9;font-weight:normal;letter-spacing:0px;-webkit-text-stroke:0.15px #e6e7e9">ToC Responsive</div>
<svg class="a" style="left:874.5px;top:92px" width="9" height="7" viewBox="0 0 9 7"><path d="M2.5 1 L0.7 3.5 L2.5 6 M6.5 1 L8.3 3.5 L6.5 6 M5.2 0.5 L3.8 6.5" fill="none" stroke="#e6e7e9" stroke-width="0.9"/></svg>
<div class="a" style="left:887.5px;top:90.60px;line-height:10px;font-size:7.1px;color:#e6e7e9;font-weight:normal;letter-spacing:0px;-webkit-text-stroke:0.15px #e6e7e9">HTML</div>
<div class="a" style="left:848.7px;top:272.6px;width:4.10px;height:62.40px;background:#c0353a"></div>
<svg class="a" style="left:830px;top:30px" width="32" height="22" viewBox="830 30 32 22"><path d="M836.2 42.4 Q844 41.2 851.4 40.9" fill="none" stroke="#36d33a" stroke-width="2" stroke-linecap="round"/><path d="M847.2 35.7 Q856 36 857 39.6 Q857.5 44 850.1 48" fill="none" stroke="#36d33a" stroke-width="2" stroke-linecap="round"/></svg>
</body></html>
